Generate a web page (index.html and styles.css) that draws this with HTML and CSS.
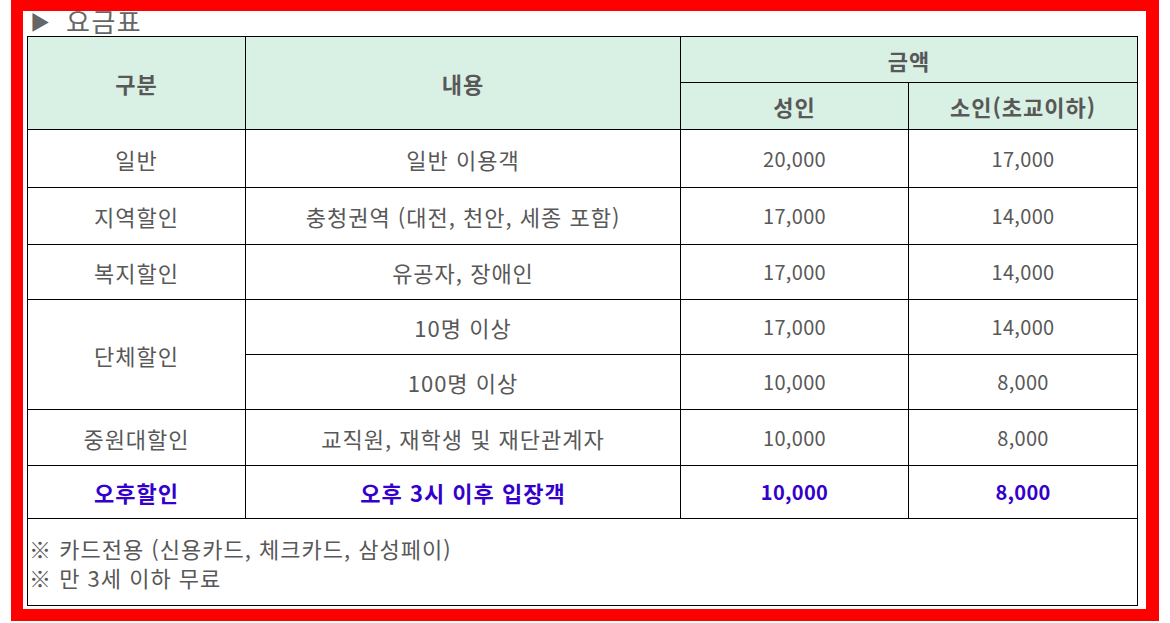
FILE: index.html
```html
<!DOCTYPE html>
<html lang="ko">
<head>
<meta charset="utf-8">
<title>요금표</title>
<link rel="stylesheet" href="styles.css">
</head>
<body>
<div class="frame">
  <h2 class="title"><span class="tri">▶</span>요금표</h2>
  <table class="fees">
    <colgroup>
      <col class="c1"><col class="c2"><col class="c3"><col class="c4">
    </colgroup>
    <thead>
      <tr class="h1">
        <th rowspan="2">구분</th>
        <th rowspan="2">내용</th>
        <th colspan="2">금액</th>
      </tr>
      <tr class="h2">
        <th>성인</th>
        <th>소인(초교이하)</th>
      </tr>
    </thead>
    <tbody>
      <tr class="r58"><td>일반</td><td>일반 이용객</td><td class="num">20,000</td><td class="num">17,000</td></tr>
      <tr class="r57"><td>지역할인</td><td>충청권역 (대전, 천안, 세종 포함)</td><td class="num">17,000</td><td class="num">14,000</td></tr>
      <tr class="r55"><td>복지할인</td><td>유공자, 장애인</td><td class="num">17,000</td><td class="num">14,000</td></tr>
      <tr class="r55"><td rowspan="2">단체할인</td><td>10명 이상</td><td class="num">17,000</td><td class="num">14,000</td></tr>
      <tr class="r55"><td>100명 이상</td><td class="num">10,000</td><td class="num">8,000</td></tr>
      <tr class="r56"><td>중원대할인</td><td>교직원, 재학생 및 재단관계자</td><td class="num">10,000</td><td class="num">8,000</td></tr>
      <tr class="r53 hl"><td>오후할인</td><td>오후 3시 이후 입장객</td><td class="num">10,000</td><td class="num">8,000</td></tr>
      <tr class="notes"><td colspan="4">※ 카드전용 (신용카드, 체크카드, 삼성페이)<br>※ 만 3세 이하 무료</td></tr>
    </tbody>
  </table>
</div>
</body>
</html>
```

FILE: styles.css
```css
html, body {
  margin: 0;
  padding: 0;
  background: #fff;
}
body {
  font-family: "Noto Sans CJK KR", "Noto Sans", sans-serif;
  color: #585858;
}
.frame {
  box-sizing: border-box;
  margin-left: 11px;
  width: 1148px;
  height: 621px;
  border: 12px solid #ff0000;
  border-top-width: 11px;
  border-right-width: 13px;
  padding: 0 0 0 4px;
  overflow: hidden;
  background: #fff;
}
.title {
  margin: -6px 0 0 0;
  height: 31px;
  font-size: 26px;
  line-height: 31px;
  font-weight: normal;
  letter-spacing: 1.5px;
  color: #666;
  white-space: nowrap;
}
.tri {
  display: inline-block;
  font-size: 20px;
  letter-spacing: 0;
  margin-left: 3px;
  margin-right: 16px;
  vertical-align: top;
  line-height: 33px;
}
.fees {
  border-collapse: collapse;
  table-layout: fixed;
  width: 1110px;
  font-size: 22px;
  letter-spacing: 1px;
}
.c1 { width: 218px; }
.c2 { width: 435px; }
.c3 { width: 228px; }
.c4 { width: 229px; }
.fees th, .fees td {
  border: 1px solid #000;
  padding: 0;
  text-align: center;
  vertical-align: middle;
  line-height: 28px;
}
.fees th {
  background: #d9f0e4;
  font-weight: bold;
  color: #585858;
}
.fees .num {
  font-size: 20px;
  letter-spacing: 0.3px;
}
.h1 { height: 46px; }
.h2 { height: 47px; }
.r58 { height: 58px; }
.r57 { height: 57px; }
.r56 { height: 56px; }
.r55 { height: 55px; }
.r53 { height: 53px; }
.hl td {
  color: #3300cc;
  font-weight: bold;
}
.notes td {
  height: 85px;
  text-align: left;
  line-height: 29px;
  padding: 1px 0 0 1px;
}
```
